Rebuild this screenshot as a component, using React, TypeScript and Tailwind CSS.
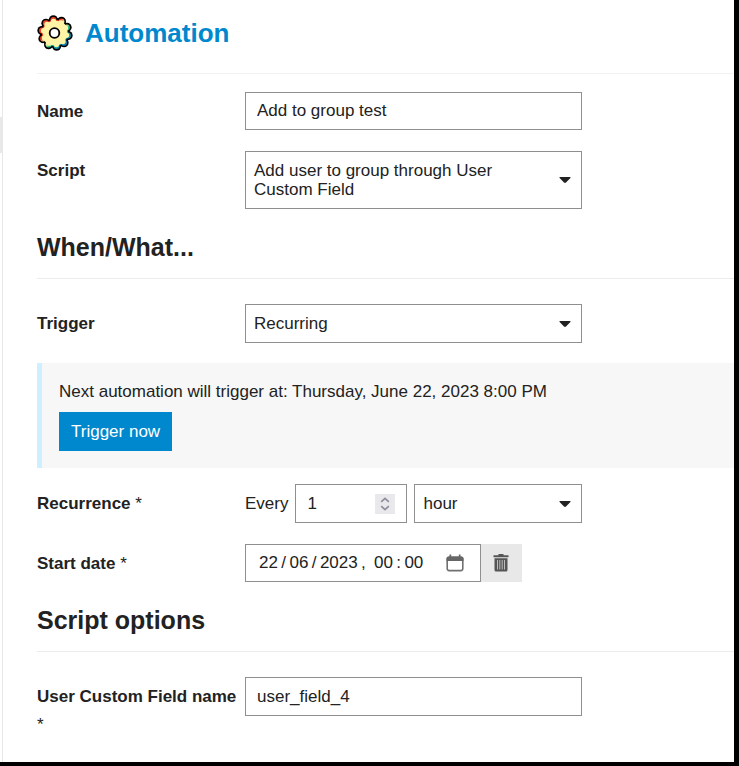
import React, { useState } from "react";

type SelectBoxProps = {
  id: string;
  label: string;
  options: string[];
  wrap?: boolean;
};

const Caret = () => (
  <svg
    viewBox="0 0 12 6"
    aria-hidden="true"
    className="pointer-events-none col-start-1 row-start-1 mr-[10px] h-[6px] w-[12px] self-center justify-self-end fill-[#222]"
  >
    <path d="M1.2 0h9.6c.9 0 1.1.6.6 1.1L7 5.5c-.6.6-1.4.6-2 0L.6 1.1C.1.6.3 0 1.2 0z" />
  </svg>
);

const SelectBox: React.FC<SelectBoxProps> = ({ id, label, options, wrap }) => {
  const [value, setValue] = useState(options[0]);

  return (
    <div className="grid w-full border border-[#8f8f8f] bg-white">
      {/* long names wrap, which a native select can't show */}
      {wrap && (
        <span
          aria-hidden="true"
          className="col-start-1 row-start-1 py-[9px] pr-[60px] pl-2 leading-[19px]"
        >
          {value}
        </span>
      )}
      <select
        id={id}
        aria-label={label}
        value={value}
        onChange={(e) => setValue(e.target.value)}
        className={
          wrap
            ? "col-start-1 row-start-1 w-full min-w-0 appearance-none opacity-0"
            : "col-start-1 row-start-1 h-[37px] w-full min-w-0 appearance-none bg-transparent pr-8 pl-2"
        }
      >
        {options.map((option) => (
          <option key={option}>{option}</option>
        ))}
      </select>
      <Caret />
    </div>
  );
};

type FieldProps = {
  id: string;
  label: string;
  required?: boolean;
  children: React.ReactNode;
};

const Field: React.FC<FieldProps> = ({ id, label, required, children }) => (
  <div className="flex items-start">
    <label
      htmlFor={id}
      className="w-[208px] shrink-0 pt-[6px] pr-2 leading-[28px] font-bold"
    >
      {label}
      {required && <span className="font-normal"> *</span>}
    </label>
    <div className="flex w-full max-w-[337px] min-w-0 items-center">
      {children}
    </div>
  </div>
);

const SectionTitle = ({ children }: { children: React.ReactNode }) => (
  <h2 className="mb-[25px] border-b border-[#ececec] pt-5 pb-[13px] text-[25px] leading-9 font-bold">
    {children}
  </h2>
);

const TEETH = [-97, -61, -25, 11, 47, 83, 119, 155, 191, 227];

type CogProps = {
  body: number;
  dist: number;
  tooth: number;
  className: string;
};

const Cog = ({ body, dist, tooth, className }: CogProps) => (
  <g className={className}>
    <circle cx="18" cy="18" r={body} />
    {TEETH.map((deg) => {
      const a = (deg * Math.PI) / 180;
      return (
        <circle
          key={deg}
          cx={18 + dist * Math.cos(a)}
          cy={18 + dist * Math.sin(a)}
          r={tooth}
        />
      );
    })}
  </g>
);

const GearIcon = () => (
  <svg viewBox="0 0 36 36" aria-hidden="true" className="h-9 w-9 shrink-0">
    <defs>
      <linearGradient
        id="cog-rim"
        gradientUnits="userSpaceOnUse"
        x1="4"
        y1="4"
        x2="32"
        y2="32"
      >
        <stop offset="0.1" stopColor="#f04a28" />
        <stop offset="0.36" stopColor="#e8361c" />
        <stop offset="0.46" stopColor="#fff3a6" />
        <stop offset="0.54" stopColor="#fff3a6" />
        <stop offset="0.64" stopColor="#19b884" />
        <stop offset="0.85" stopColor="#0a86b8" />
      </linearGradient>
    </defs>
    <Cog body={15} dist={13.4} tooth={4.5} className="fill-black" />
    <Cog
      body={13.2}
      dist={13.2}
      tooth={3}
      className="fill-[url(#cog-rim)]"
    />
    <Cog body={12.2} dist={11.6} tooth={2.7} className="fill-[#fff3a6]" />
    <circle
      cx="17.5"
      cy="18"
      r="4.8"
      className="fill-white stroke-black"
      strokeWidth="1.8"
    />
  </svg>
);

const CalendarIcon = () => (
  <svg viewBox="0 0 18 18" aria-hidden="true" className="h-[18px] w-[18px]">
    <rect
      x="1.2"
      y="3.2"
      width="15.6"
      height="13.4"
      rx="2"
      className="fill-none stroke-[#707070]"
      strokeWidth="1.6"
    />
    <path
      d="M.5 7V4.4A2 2 0 0 1 2.5 2.400h1V.6h1.700v1.800h7.600V.6h1.700v1.800h1a2 2 0 0 1 2 2V7z"
      className="fill-[#666]"
    />
  </svg>
);

const TrashIcon = () => (
  <svg viewBox="0 0 16 18" aria-hidden="true" className="mr-px h-[18px] w-4">
    <path d="M5.5 0h5v1.200h5v2H.5v-2h5z" className="fill-[#555]" />
    <path
      d="M1.5 4.200h13V16a1.500 1.500 0 0 1-1.500 1.500H3A1.500 1.500 0 0 1 1.500 16z"
      className="fill-[#555]"
    />
    <path
      d="M4.500 6v9.500M6.800 6v9.500M9.200 6v9.500M11.500 6v9.500"
      className="stroke-[#c8c8c8]"
      strokeWidth="0.9"
    />
  </svg>
);

const inputClass =
  "w-full min-w-0 border border-[#8f8f8f] bg-white px-[11px]";

const App = () => {
  const [name, setName] = useState("Add to group test");
  const [every, setEvery] = useState(1);
  const [startDate, setStartDate] = useState(
    "22\u2009/\u200906\u2009/\u20092023\u2009, \u200900\u2009:\u200900"
  );
  const [customField, setCustomField] = useState("user_field_4");

  return (
    <div className="flex min-h-screen border-r-[5px] border-b-4 border-black bg-white font-['Liberation_Sans',Arial,sans-serif] text-[17px] text-[#222]">
      {/* EDGE OF THE SIDE MENU */}
      <div className="w-[3px] shrink-0 border-r border-[#e8e8e8] pt-[117px]">
        <div className="h-9 bg-[#e8e8e8]" />
      </div>

      <main className="min-w-0 flex-1 pl-[34px]">
        <header className="flex items-center gap-3 border-b border-[#f2f2f2] pt-[15px] pb-[22px]">
          <GearIcon />
          <h1 className="text-[26px] leading-9 font-bold text-[#0088ce]">
            Automation
          </h1>
        </header>

        <form onSubmit={(e) => e.preventDefault()}>
          <div className="flex flex-col gap-[21px] pt-[18px]">
            <Field id="name" label="Name">
              <input
                id="name"
                type="text"
                value={name}
                onChange={(e) => setName(e.target.value)}
                className={`${inputClass} h-[38px]`}
              />
            </Field>
            <Field id="script" label="Script">
              <SelectBox
                id="script"
                label="Script"
                options={["Add user to group through User Custom Field"]}
                wrap
              />
            </Field>
          </div>

          <SectionTitle>When/What...</SectionTitle>

          <Field id="trigger" label="Trigger">
            <SelectBox id="trigger" label="Trigger" options={["Recurring"]} />
          </Field>

          {/* NEXT RUN */}
          <div className="mt-5 mb-4 border-l-[5px] border-[#cdefff] bg-[#f7f7f7] px-[17px] pt-[15px] pb-[17px]">
            <p className="mb-[6px] leading-[28px]">
              Next automation will trigger at: Thursday, June 22, 2023 8:00 PM
            </p>
            <button
              type="button"
              className="h-[39px] bg-[#0088ce] px-3 text-white"
            >
              Trigger now
            </button>
          </div>

          <div className="flex flex-col gap-[21px]">
            <Field id="every" label="Recurrence" required>
              <span className="mr-[7px]">Every</span>
              <div className="mr-[7px] flex h-[39px] w-[112px] shrink-0 items-center border border-[#8f8f8f] bg-white px-[11px]">
                <input
                  id="every"
                  type="number"
                  min={1}
                  value={every}
                  onChange={(e) => setEvery(Number(e.target.value))}
                  className="w-full min-w-0 appearance-none [&::-webkit-inner-spin-button]:appearance-none"
                />
                <div className="flex h-5 w-5 shrink-0 flex-col bg-[#e9e9ed]">
                  <button
                    type="button"
                    aria-label="Increase"
                    onClick={() => setEvery(every + 1)}
                    className="flex h-[10px] items-end justify-center pb-px"
                  >
                    <svg viewBox="0 0 10 6" className="h-[6px] w-[10px]">
                      <path
                        d="M1.2 4.900L5 1.300l3.800 3.600"
                        className="fill-none stroke-[#8f8f9d]"
                        strokeWidth="1.7"
                      />
                    </svg>
                  </button>
                  <button
                    type="button"
                    aria-label="Decrease"
                    onClick={() => setEvery(Math.max(1, every - 1))}
                    className="flex h-[10px] items-start justify-center pt-px"
                  >
                    <svg viewBox="0 0 10 6" className="h-[6px] w-[10px]">
                      <path
                        d="M1.2 1.100L5 4.700l3.800-3.600"
                        className="fill-none stroke-[#8f8f9d]"
                        strokeWidth="1.7"
                      />
                    </svg>
                  </button>
                </div>
              </div>
              <SelectBox id="unit" label="Interval unit" options={["hour"]} />
            </Field>

            <Field id="start" label="Start date" required>
              <div className="flex h-[38px] w-[236px] items-center border border-[#8f8f8f] bg-white pr-4 pl-[13px]">
                <input
                  id="start"
                  type="text"
                  value={startDate}
                  onChange={(e) => setStartDate(e.target.value)}
                  className="w-full min-w-0"
                />
                <button type="button" aria-label="Open calendar">
                  <CalendarIcon />
                </button>
              </div>
              <button
                type="button"
                aria-label="Clear start date"
                className="flex h-[38px] w-[41px] items-center justify-center bg-[#e8e8e8]"
              >
                <TrashIcon />
              </button>
            </Field>
          </div>

          <SectionTitle>Script options</SectionTitle>

          <Field id="custom-field" label="User Custom Field name" required>
            <input
              id="custom-field"
              type="text"
              value={customField}
              onChange={(e) => setCustomField(e.target.value)}
              className={`${inputClass} h-[39px]`}
            />
          </Field>
        </form>
      </main>
    </div>
  );
};

export default App;
